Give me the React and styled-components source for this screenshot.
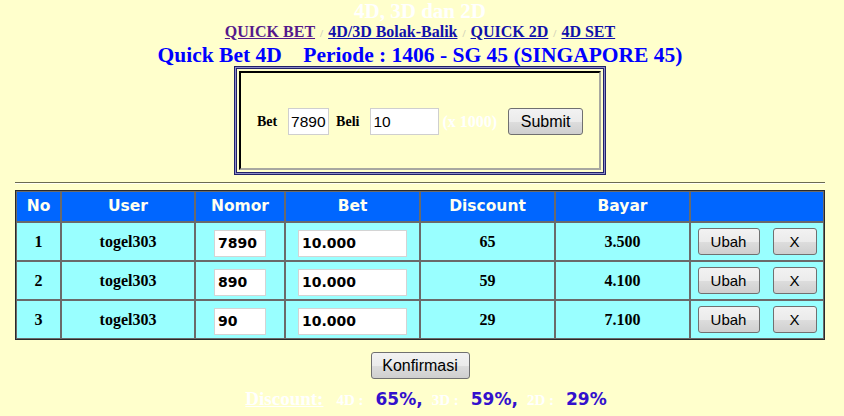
import React from 'react';
import styled, { createGlobalStyle } from 'styled-components';

const GlobalStyle = createGlobalStyle`
  html, body {
    margin: 0;
    background: #ffffcc;
  }
  body {
    font-family: "Liberation Serif", "Times New Roman", serif;
    overflow: hidden;
  }
`;

const Page = styled.div`
  width: 810px;
  margin-left: 15px;
  display: flex;
  flex-direction: column;
  align-items: center;
`;

const Title = styled.h1`
  margin: 0;
  font-size: 21px;
  line-height: 22px;
  font-weight: bold;
  color: #ffffff;
`;

const Nav = styled.nav`
  font-size: 16px;
  line-height: 20px;
  font-weight: bold;
`;

const NavLink = styled.a`
  color: ${p => (p.$visited ? '#551a8b' : '#1111aa')};
  text-decoration: underline;
`;

const Sep = styled.span`
  margin: 0 5px;
  font-size: 11px;
  color: #d0d0b8;
`;

const Heading = styled.h2`
  margin: 0;
  font-size: 21.5px;
  line-height: 24px;
  font-weight: bold;
  color: #0000ff;
  white-space: pre;
`;

const BetFrame = styled.div`
  box-sizing: border-box;
  width: 372px;
  height: 109px;
  margin-top: -1px;
  padding: 4px;
  border: 1px solid #20206a;
  box-shadow: inset 0 0 0 1px #8c8cc8, inset 0 0 0 2px #20206a;
`;

const BetForm = styled.form`
  box-sizing: border-box;
  height: 100%;
  padding-top: 2px;
  display: flex;
  align-items: center;
  justify-content: center;
  border: 2px solid;
  border-color: #000000 #a8a8a0 #a8a8a0 #000000;
`;

const Label = styled.label`
  margin-right: 11px;
  font-size: 14px;
  font-weight: bold;
  color: #000;
`;

const FormInput = styled.input`
  box-sizing: border-box;
  width: ${p => p.$w}px;
  height: 27px;
  margin-right: ${p => p.$gap}px;
  padding: 0 1px 0 2px;
  border: 1px solid #cfcfcf;
  background: #fff;
  font-family: "Liberation Sans", Arial, sans-serif;
  font-size: 15.5px;
  color: #000;
`;

const Multiplier = styled.span`
  margin-right: 11px;
  font-size: 16px;
  font-weight: bold;
  color: #ffffff;
`;

const Button = styled.button`
  box-sizing: border-box;
  width: ${p => p.$w}px;
  height: 27px;
  padding: 0;
  border: 1px solid #707070;
  border-radius: 3px;
  background: linear-gradient(#f2f2f2 0%, #ebebeb 50%, #dddddd 51%, #cfcfcf 100%);
  font-family: "Liberation Sans", Arial, sans-serif;
  font-size: ${p => p.$size || 15}px;
  color: #000;
`;

const Rule = styled.hr`
  width: 100%;
  height: 0;
  margin: 7px 0 6px;
  border: 0;
  border-top: 1px solid #6b6b50;
  border-bottom: 1px solid #fffff4;
`;

const Table = styled.table`
  width: 810px;
  border-collapse: separate;
  border-spacing: 0;
  border: 1px solid #2a2a2a;
  table-layout: fixed;
`;

const HeadCell = styled.th`
  width: ${p => p.$w}px;
  padding: 0;
  border: 1px solid #6a6a6a;
  background: #0066ff;
  color: #fffff0;
  font-family: "DejaVu Sans", Verdana, sans-serif;
  font-size: 15.5px;
  font-weight: bold;
  line-height: 29px;
  text-align: center;
`;

const Cell = styled.td`
  padding: 0;
  border: 1px solid #6a6a6a;
  background: #99ffff;
  font-size: 16px;
  font-weight: bold;
  line-height: 37px;
  text-align: center;
  vertical-align: middle;
`;

const CellInput = styled.input`
  box-sizing: border-box;
  width: ${p => p.$w}px;
  height: 27px;
  padding: 0 3px;
  vertical-align: middle;
  border: 1px solid #d4d4d4;
  background: #fff;
  font-family: "DejaVu Sans", Verdana, sans-serif;
  font-size: 14px;
  font-weight: bold;
  color: #000;
`;

const Actions = styled.div`
  display: flex;
  justify-content: center;
  gap: 13px;
`;

const Confirm = styled.div`
  margin-top: 12px;
`;

const Summary = styled.div`
  margin-top: 8px;
  margin-left: 12px;
  line-height: 24px;
  font-weight: bold;
  white-space: pre;
`;

const SummaryLabel = styled.a`
  margin-right: 13px;
  font-size: 19px;
  color: #ffffff;
  text-decoration: underline;
`;

const SummaryCode = styled.span`
  font-size: 15px;
  color: #ffffff;
`;

const SummaryPct = styled.span`
  margin-left: 12px;
  margin-right: ${p => (p.$last ? 0 : 9)}px;
  font-family: "DejaVu Sans", Verdana, sans-serif;
  font-size: 17px;
  color: #3311cc;
`;

const columns = [
  ['No', 43],
  ['User', 132],
  ['Nomor', 88],
  ['Bet', 133],
  ['Discount', 133],
  ['Bayar', 133],
  ['', 132],
];

const bets = [
  { id: 1, user: 'togel303', nomor: '7890', bet: '10.000', discount: 65, bayar: '3.500' },
  { id: 2, user: 'togel303', nomor: '890', bet: '10.000', discount: 59, bayar: '4.100' },
  { id: 3, user: 'togel303', nomor: '90', bet: '10.000', discount: 29, bayar: '7.100' },
];

export default function App() {
  return (
    <>
      <GlobalStyle />
      <Page>
        <Title>4D, 3D dan 2D</Title>
        <Nav>
          <NavLink href="#" $visited>QUICK BET</NavLink>
          <Sep>/</Sep>
          <NavLink href="#">4D/3D Bolak-Balik</NavLink>
          <Sep>/</Sep>
          <NavLink href="#">QUICK 2D</NavLink>
          <Sep>/</Sep>
          <NavLink href="#">4D SET</NavLink>
        </Nav>
        <Heading>Quick Bet 4D    Periode : 1406 - SG 45 (SINGAPORE 45)</Heading>

        <BetFrame>
          <BetForm onSubmit={e => e.preventDefault()}>
            <Label>Bet</Label>
            <FormInput $w={41} $gap={7} defaultValue="7890" />
            <Label>Beli</Label>
            <FormInput $w={69} $gap={3} defaultValue="10" />
            <Multiplier>(x 1000)</Multiplier>
            <Button $w={75} $size={16}>Submit</Button>
          </BetForm>
        </BetFrame>

        <Rule />

        <Table>
          <thead>
            <tr>
              {columns.map(([name, w]) => (
                <HeadCell key={name || 'aksi'} $w={w}>{name}</HeadCell>
              ))}
            </tr>
          </thead>
          <tbody>
            {bets.map(b => (
              <tr key={b.id}>
                <Cell>{b.id}</Cell>
                <Cell>{b.user}</Cell>
                <Cell><CellInput $w={52} defaultValue={b.nomor} /></Cell>
                <Cell><CellInput $w={109} defaultValue={b.bet} /></Cell>
                <Cell>{b.discount}</Cell>
                <Cell>{b.bayar}</Cell>
                <Cell>
                  <Actions>
                    <Button $w={62}>Ubah</Button>
                    <Button $w={44}>X</Button>
                  </Actions>
                </Cell>
              </tr>
            ))}
          </tbody>
        </Table>

        <Confirm>
          <Button $w={99} $size={16}>Konfirmasi</Button>
        </Confirm>

        <Summary>
          <SummaryLabel href="#">Discount:</SummaryLabel>
          <SummaryCode>4D :</SummaryCode>
          <SummaryPct>65%,</SummaryPct>
          <SummaryCode>3D :</SummaryCode>
          <SummaryPct>59%,</SummaryPct>
          <SummaryCode>2D :</SummaryCode>
          <SummaryPct $last>29%</SummaryPct>
        </Summary>
      </Page>
    </>
  );
}
